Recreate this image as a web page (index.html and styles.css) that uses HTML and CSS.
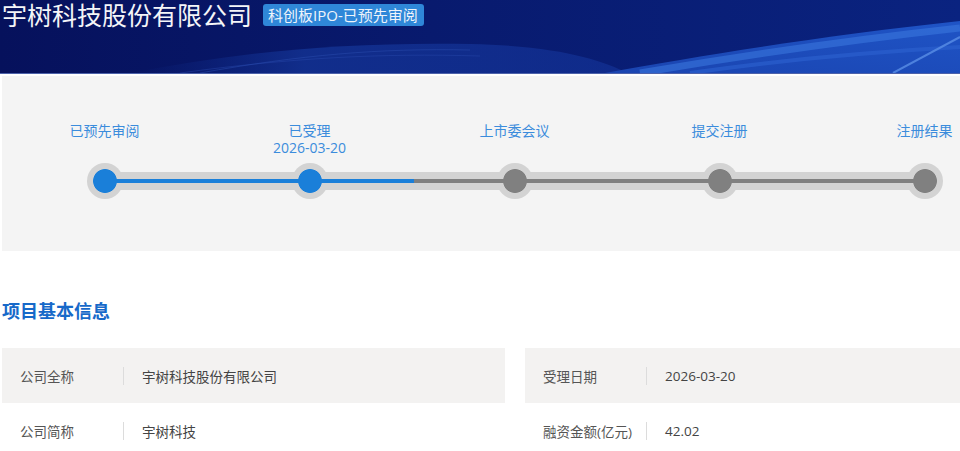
FILE: index.html
```html
<!DOCTYPE html>
<html lang="zh-CN">
<head>
<meta charset="utf-8">
<title>宇树科技股份有限公司</title>
<link rel="stylesheet" href="styles.css">
</head>
<body>
<header class="hero">
  <svg class="hero-bg" viewBox="0 0 960 73" preserveAspectRatio="none" aria-hidden="true">
    <defs>
      <linearGradient id="faint" x1="0" y1="0" x2="1" y2="0">
        <stop offset="0" stop-color="#0d2580" stop-opacity="0"/>
        <stop offset="0.35" stop-color="#12308f" stop-opacity="0.9"/>
        <stop offset="1" stop-color="#14349a" stop-opacity="0.6"/>
      </linearGradient>
      <linearGradient id="bright" x1="0" y1="1" x2="1" y2="0">
        <stop offset="0" stop-color="#1a44b0"/>
        <stop offset="1" stop-color="#1f54c6"/>
      </linearGradient>
    </defs>
    <path d="M130 73 C 240 52, 340 42, 470 44 C 560 46, 600 60, 628 73 Z" fill="url(#faint)"/>
    <path d="M200 73 C 300 55, 380 48, 470 50" stroke="#2a4cae" stroke-width="1" fill="none" opacity="0.5"/>
    <path d="M180 73 C 290 58, 380 53, 480 56" stroke="#2a4cae" stroke-width="1" fill="none" opacity="0.4"/>
    <path d="M605 73 C 700 56, 820 36, 960 21 L 960 73 Z" fill="url(#bright)"/>
    <path d="M640 73 C 740 56, 850 40, 960 28" stroke="#3d7ae0" stroke-width="7" fill="none" opacity="0.55"/>
    <path d="M690 73 C 780 60, 870 52, 960 47" stroke="#2d63d0" stroke-width="4" fill="none" opacity="0.6"/>
    <path d="M893 73 L 960 37" stroke="#5a8fe6" stroke-width="2" fill="none" opacity="0.8"/>
  </svg>
  <div class="hero-inner">
    <h1 class="hero-title">宇树科技股份有限公司</h1>
    <span class="hero-badge">科创板IPO-已预先审阅</span>
  </div>
</header>

<main class="page">
  <section class="progress">
    <div class="step-labels">
      <div class="step-label">已预先审阅</div>
      <div class="step-label">已受理<br>2026-03-20</div>
      <div class="step-label">上市委会议</div>
      <div class="step-label">提交注册</div>
      <div class="step-label">注册结果</div>
    </div>
    <div class="track">
      <span class="node is-done is-first"></span>
      <span class="node is-done"></span>
      <span class="node"></span>
      <span class="node"></span>
      <span class="node is-last"></span>
    </div>
  </section>

  <h2 class="section-title">项目基本信息</h2>

  <section class="info">
    <div class="info-col">
      <div class="info-row">
        <span class="info-label">公司全称</span>
        <span class="info-sep"></span>
        <span class="info-value">宇树科技股份有限公司</span>
      </div>
      <div class="info-row">
        <span class="info-label">公司简称</span>
        <span class="info-sep"></span>
        <span class="info-value">宇树科技</span>
      </div>
    </div>
    <div class="info-col">
      <div class="info-row">
        <span class="info-label">受理日期</span>
        <span class="info-sep"></span>
        <span class="info-value">2026-03-20</span>
      </div>
      <div class="info-row">
        <span class="info-label">融资金额(亿元)</span>
        <span class="info-sep"></span>
        <span class="info-value">42.02</span>
      </div>
    </div>
  </section>
</main>
</body>
</html>
```

FILE: styles.css
```css
* {
  box-sizing: border-box;
}

html, body {
  margin: 0;
  padding: 0;
  background: #ffffff;
  overflow: hidden;
}

body {
  font-family: "Open Sans", "Noto Sans CJK SC", "Noto Sans", sans-serif;
  color: #444;
}

/* ---------- header ---------- */
.hero {
  position: relative;
  height: 74px;
  background: linear-gradient(90deg, #06115c 0%, #081a6e 45%, #0a2380 100%);
  border-bottom: 1px solid #4d62aa;
  overflow: hidden;
}

.hero-bg {
  position: absolute;
  left: 0;
  top: 0;
  width: 100%;
  height: 73px;
}

.hero-inner {
  position: relative;
  display: flex;
  align-items: center;
  gap: 11px;
  padding-left: 2px;
  padding-top: 1px;
}

.hero-title {
  margin: 0;
  font-size: 25px;
  line-height: 28px;
  font-weight: 400;
  color: #f4f5f8;
  letter-spacing: 0;
}

.hero-badge {
  display: inline-block;
  height: 22px;
  line-height: 22px;
  padding: 0 6px 0 5px;
  background: #2f87d8;
  color: #eef4fb;
  font-size: 15px;
  border-radius: 3px;
}

/* ---------- page ---------- */
.page {
  width: 1026px;
  margin-left: 2px;
}

/* ---------- progress ---------- */
.progress {
  margin-top: 2px;
  background: #f4f4f4;
  padding: 46px 0 52px;
}

.step-labels {
  display: grid;
  grid-template-columns: repeat(5, 205px);
  height: 34px;
  margin-bottom: 7px;
}

.step-label {
  text-align: center;
  font-size: 14px;
  line-height: 17px;
  color: #3b8cdc;
}

.track {
  --blue: #1a7fd9;
  --gray: #808080;
  width: 856px;
  height: 36px;
  margin-left: 84.5px;
  display: flex;
  justify-content: space-between;
  background:
    linear-gradient(90deg, transparent 18px, var(--blue) 18px, var(--blue) 326.5px, var(--gray) 326.5px, var(--gray) 838px, transparent 838px) center / 100% 4px no-repeat,
    linear-gradient(90deg, transparent 18px, #d3d3d3 18px, #d3d3d3 838px, transparent 838px) center / 100% 18px no-repeat;
}

.node {
  --c: var(--gray);
  --lp: center;
  --ls: 100% 4px;
  width: 36px;
  height: 36px;
  border-radius: 50%;
  background:
    radial-gradient(circle, var(--c) 0 11.5px, transparent 12.3px),
    linear-gradient(var(--c), var(--c)) var(--lp) / var(--ls) no-repeat,
    #d3d3d3;
}

.node.is-done {
  --c: var(--blue);
}

.node.is-first {
  --lp: right center;
  --ls: 50% 4px;
}

.node.is-last {
  --lp: left center;
  --ls: 50% 4px;
}

/* ---------- section title ---------- */
.section-title {
  margin: 48px 0 25px;
  font-size: 18px;
  line-height: 24px;
  font-weight: 700;
  color: #1769c9;
}

/* ---------- info grid ---------- */
.info {
  display: grid;
  grid-template-columns: 503px 503px;
  column-gap: 20px;
}

.info-row {
  display: flex;
  align-items: center;
  height: 55px;
  padding-left: 18px;
  font-size: 13.5px;
}

.info-row:nth-child(odd) {
  background: #f3f2f1;
}

.info-label {
  width: 103px;
  color: #555;
  white-space: nowrap;
}

.info-sep {
  width: 1px;
  height: 18px;
  background: #dcdcdc;
}

.info-value {
  padding-left: 18px;
  color: #444;
}
```
